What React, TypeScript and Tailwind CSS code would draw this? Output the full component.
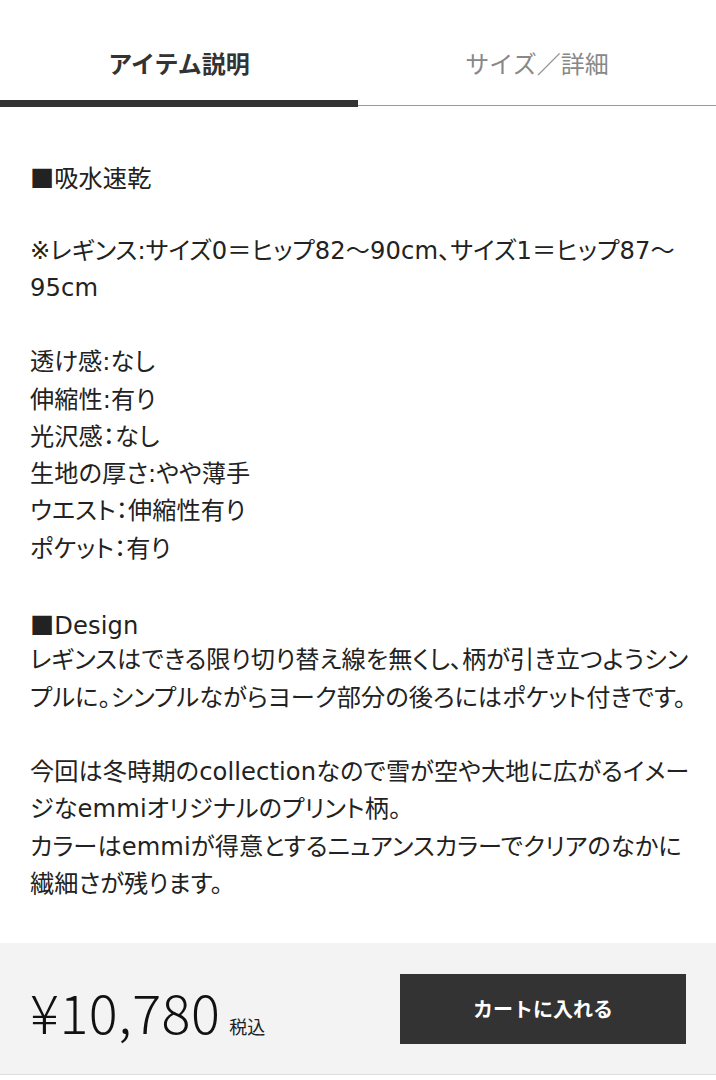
import React from "react";

const font = { fontFamily: '"Noto Sans CJK JP", "Noto Sans", sans-serif' };
const bodyFont = { fontFamily: '"DejaVu Sans", "Noto Sans CJK JP", sans-serif' };
const cjk = { fontFamily: '"Noto Sans CJK JP", sans-serif' };

const lines: string[] = [
  "■吸水速乾",
  "",
  "※レギンス:サイズ0＝ヒップ82〜90cm、サイズ1＝ヒップ87〜",
  "95cm",
  "",
  "透け感:なし",
  "伸縮性:有り",
  "光沢感：なし",
  "生地の厚さ:やや薄手",
  "ウエスト：伸縮性有り",
  "ポケット：有り",
  "",
  "■Design",
  "レギンスはできる限り切り替え線を無くし、柄が引き立つようシン",
  "プルに。シンプルながらヨーク部分の後ろにはポケット付きです。",
  "",
  "今回は冬時期のcollectionなので雪が空や大地に広がるイメー",
  "ジなemmiオリジナルのプリント柄。",
  "カラーはemmiが得意とするニュアンスカラーでクリアのなかに",
  "繊細さが残ります。",
];

function Line({ text }: { text: string }) {
  if (text.startsWith("■")) {
    return (
      <>
        <span style={cjk}>■</span>
        {text.slice(1)}
      </>
    );
  }
  return <>{text}</>;
}

export default function App() {
  return (
    <div className="w-[716px] min-h-[1080px] bg-white text-[#222]" style={font}>
      <div className="flex h-[107px]">
        <div className="flex w-[358px] flex-col justify-between">
          <div className="pt-[46px] text-center text-[24px] font-bold leading-[34px] text-[#333]">
            アイテム説明
          </div>
          <div className="h-[7px] bg-[#333]" />
        </div>
        <div className="flex flex-1 flex-col justify-between">
          <div className="pt-[46px] text-center text-[24px] leading-[34px] text-[#888]">
            サイズ／詳細
          </div>
          <div className="mb-px h-px bg-[#999]" />
        </div>
      </div>

      <div
        className="px-[30px] pt-[51px] pb-[40px] text-[24.2px] leading-[37.26px] tracking-[0.1px] [font-feature-settings:'palt']"
        style={bodyFont}
      >
        {lines.map((l, i) => (
          <div key={i} className="whitespace-nowrap h-[37.26px]">
            <Line text={l} />
          </div>
        ))}
      </div>

      <div className="flex h-[132px] items-center justify-between border-b border-[#ddd] bg-[#f3f3f3] pl-[30px] pr-[30px]">
        <div className="flex items-baseline gap-[9px] pt-[4px]">
          <span className="text-[54px] font-light leading-none tracking-[0.5px] text-[#111]">¥10,780</span>
          <span className="text-[18px] leading-none text-[#222]">税込</span>
        </div>
        <button className="flex h-[70px] w-[286px] items-center justify-center bg-[#333] text-[20px] font-bold text-white">
          カートに入れる
        </button>
      </div>
    </div>
  );
}
